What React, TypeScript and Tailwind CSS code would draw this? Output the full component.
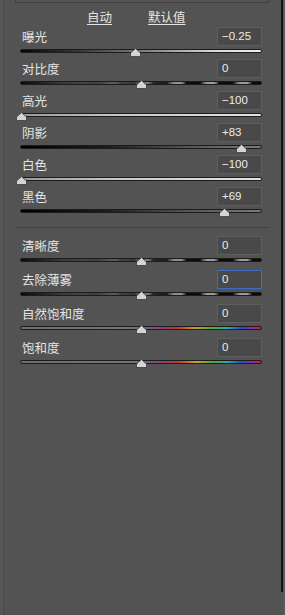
import React from "react";

type Kind = "bw" | "contrast" | "light" | "dark" | "sat";

interface Row {
  label: string;
  value: string;
  pos: number; // 0..1
  kind: Kind;
  focused?: boolean;
}

const TRACK_W = 242;

const trackBg: Record<Kind, string> = {
  bw: "bg-[linear-gradient(90deg,#050505_0%,#3a3a3a_25%,#8a8a8a_55%,#d8d8d8_80%,#f0f0f0_100%)]",
  contrast:
    "bg-[linear-gradient(90deg,#0c0c0c_0%,#3c3c3c_18%,rgba(80,80,80,0.85)_40%,rgba(80,80,80,0.3)_58%,rgba(80,80,80,0)_72%),repeating-linear-gradient(90deg,#0a0a0a_0px,#0a0a0a_14px,#5a5a5a_17px,#9c9c9c_21px,#9c9c9c_28px,#5a5a5a_31px,#0a0a0a_33px)]",
  light: "bg-[linear-gradient(90deg,#9a9a9a_0%,#c8c8c8_40%,#e4e4e4_100%)]",
  dark: "bg-[linear-gradient(90deg,#000000_0%,#1c1c1c_35%,#555555_70%,#7a7a7a_100%)]",
  sat: "bg-[linear-gradient(90deg,#6e6e6e_0%,#757575_46%,#6a5d86_54%,#9a3a5a_60%,#c0402c_66%,#c8a030_73%,#4aa83c_80%,#2aa8b0_86%,#3048c8_92%,#a02898_97%,#c0204a_100%)]",
};

const section1: Row[] = [
  { label: "曝光", value: "−0.25", pos: 0.475, kind: "bw" },
  { label: "对比度", value: "0", pos: 0.5, kind: "contrast" },
  { label: "高光", value: "−100", pos: 0, kind: "light" },
  { label: "阴影", value: "+83", pos: 0.915, kind: "dark" },
  { label: "白色", value: "−100", pos: 0, kind: "light" },
  { label: "黑色", value: "+69", pos: 0.845, kind: "dark" },
];

const section2: Row[] = [
  { label: "清晰度", value: "0", pos: 0.5, kind: "contrast" },
  { label: "去除薄雾", value: "0", pos: 0.5, kind: "contrast", focused: true },
  { label: "自然饱和度", value: "0", pos: 0.5, kind: "sat" },
  { label: "饱和度", value: "0", pos: 0.5, kind: "sat" },
];

function Thumb({ pos }: { pos: number }) {
  const x = Math.round(pos * (TRACK_W - 2)) + 1;
  return (
    <svg
      width="11"
      height="9"
      viewBox="0 0 11 9"
      className="absolute top-[-1px]"
      style={{ left: x - 5.5 }}
    >
      <polygon
        points="5.5,0.5 10.5,5 10.5,8.5 0.5,8.5 0.5,5"
        fill="#d4d4d4"
        stroke="#3a3a3a"
        strokeWidth="0.8"
      />
    </svg>
  );
}

function SliderRow({ row, tall }: { row: Row; tall?: boolean }) {
  return (
    <div className={`flex flex-col ${tall ? "h-[34px]" : "h-[32px]"}`}>
      <div className="flex h-[19px] items-center justify-between">
        <span className="ml-[2px] text-[12.5px] leading-[19px] text-[#e4e4e4]">
          {row.label}
        </span>
        <div
          className={`flex h-[19px] w-[45px] items-center bg-[#494949] pl-[4px] font-['Liberation_Sans',sans-serif] text-[11.5px] text-[#ececec] ${
            row.focused
              ? "border-[1.5px] border-[#3b6fc2]"
              : "border border-[#5e5e5e]"
          }`}
        >
          {row.value}
        </div>
      </div>
      <div className="relative mt-[3px] h-[4px] w-[242px]">
        <div
          className={`h-[4px] w-full rounded-full border border-[#1c1c1c] ${trackBg[row.kind]}`}
        />
        <Thumb pos={row.pos} />
      </div>
    </div>
  );
}

export default function App() {
  return (
    <div className="flex h-[615px] w-[285px] overflow-hidden bg-[#535353] font-['Noto_Sans_CJK_SC',sans-serif]">
      <div className="h-full w-[3px] bg-[#575757]" />
      <div className="h-full w-px bg-[#4a4a4a]" />
      <div className="flex h-full w-[277px] flex-col">
        <div className="ml-[11px] h-[3px] w-[254px] border-x border-b border-[#404040]" />
        <div className="ml-[83px] mt-[5px] flex h-[19px] items-center gap-[36px] text-[12.5px] text-[#e4e4e4]">
          <span className="underline underline-offset-[2px]">自动</span>
          <span className="underline underline-offset-[2px]">默认值</span>
        </div>
        <div className="ml-[16px] flex w-[242px] flex-col">
          {section1.map((r) => (
            <SliderRow key={r.label} row={r} />
          ))}
        </div>
        <div className="ml-[11px] mt-[8px] h-px w-[255px] bg-[#444444]" />
        <div className="ml-[16px] mt-[8px] flex w-[242px] flex-col">
          {section2.map((r) => (
            <SliderRow key={r.label} row={r} tall />
          ))}
        </div>
      </div>
      <div className="h-[592px] w-[2px] bg-[#111111]" />
      <div className="h-full w-[2px] bg-[#595959]" />
    </div>
  );
}
